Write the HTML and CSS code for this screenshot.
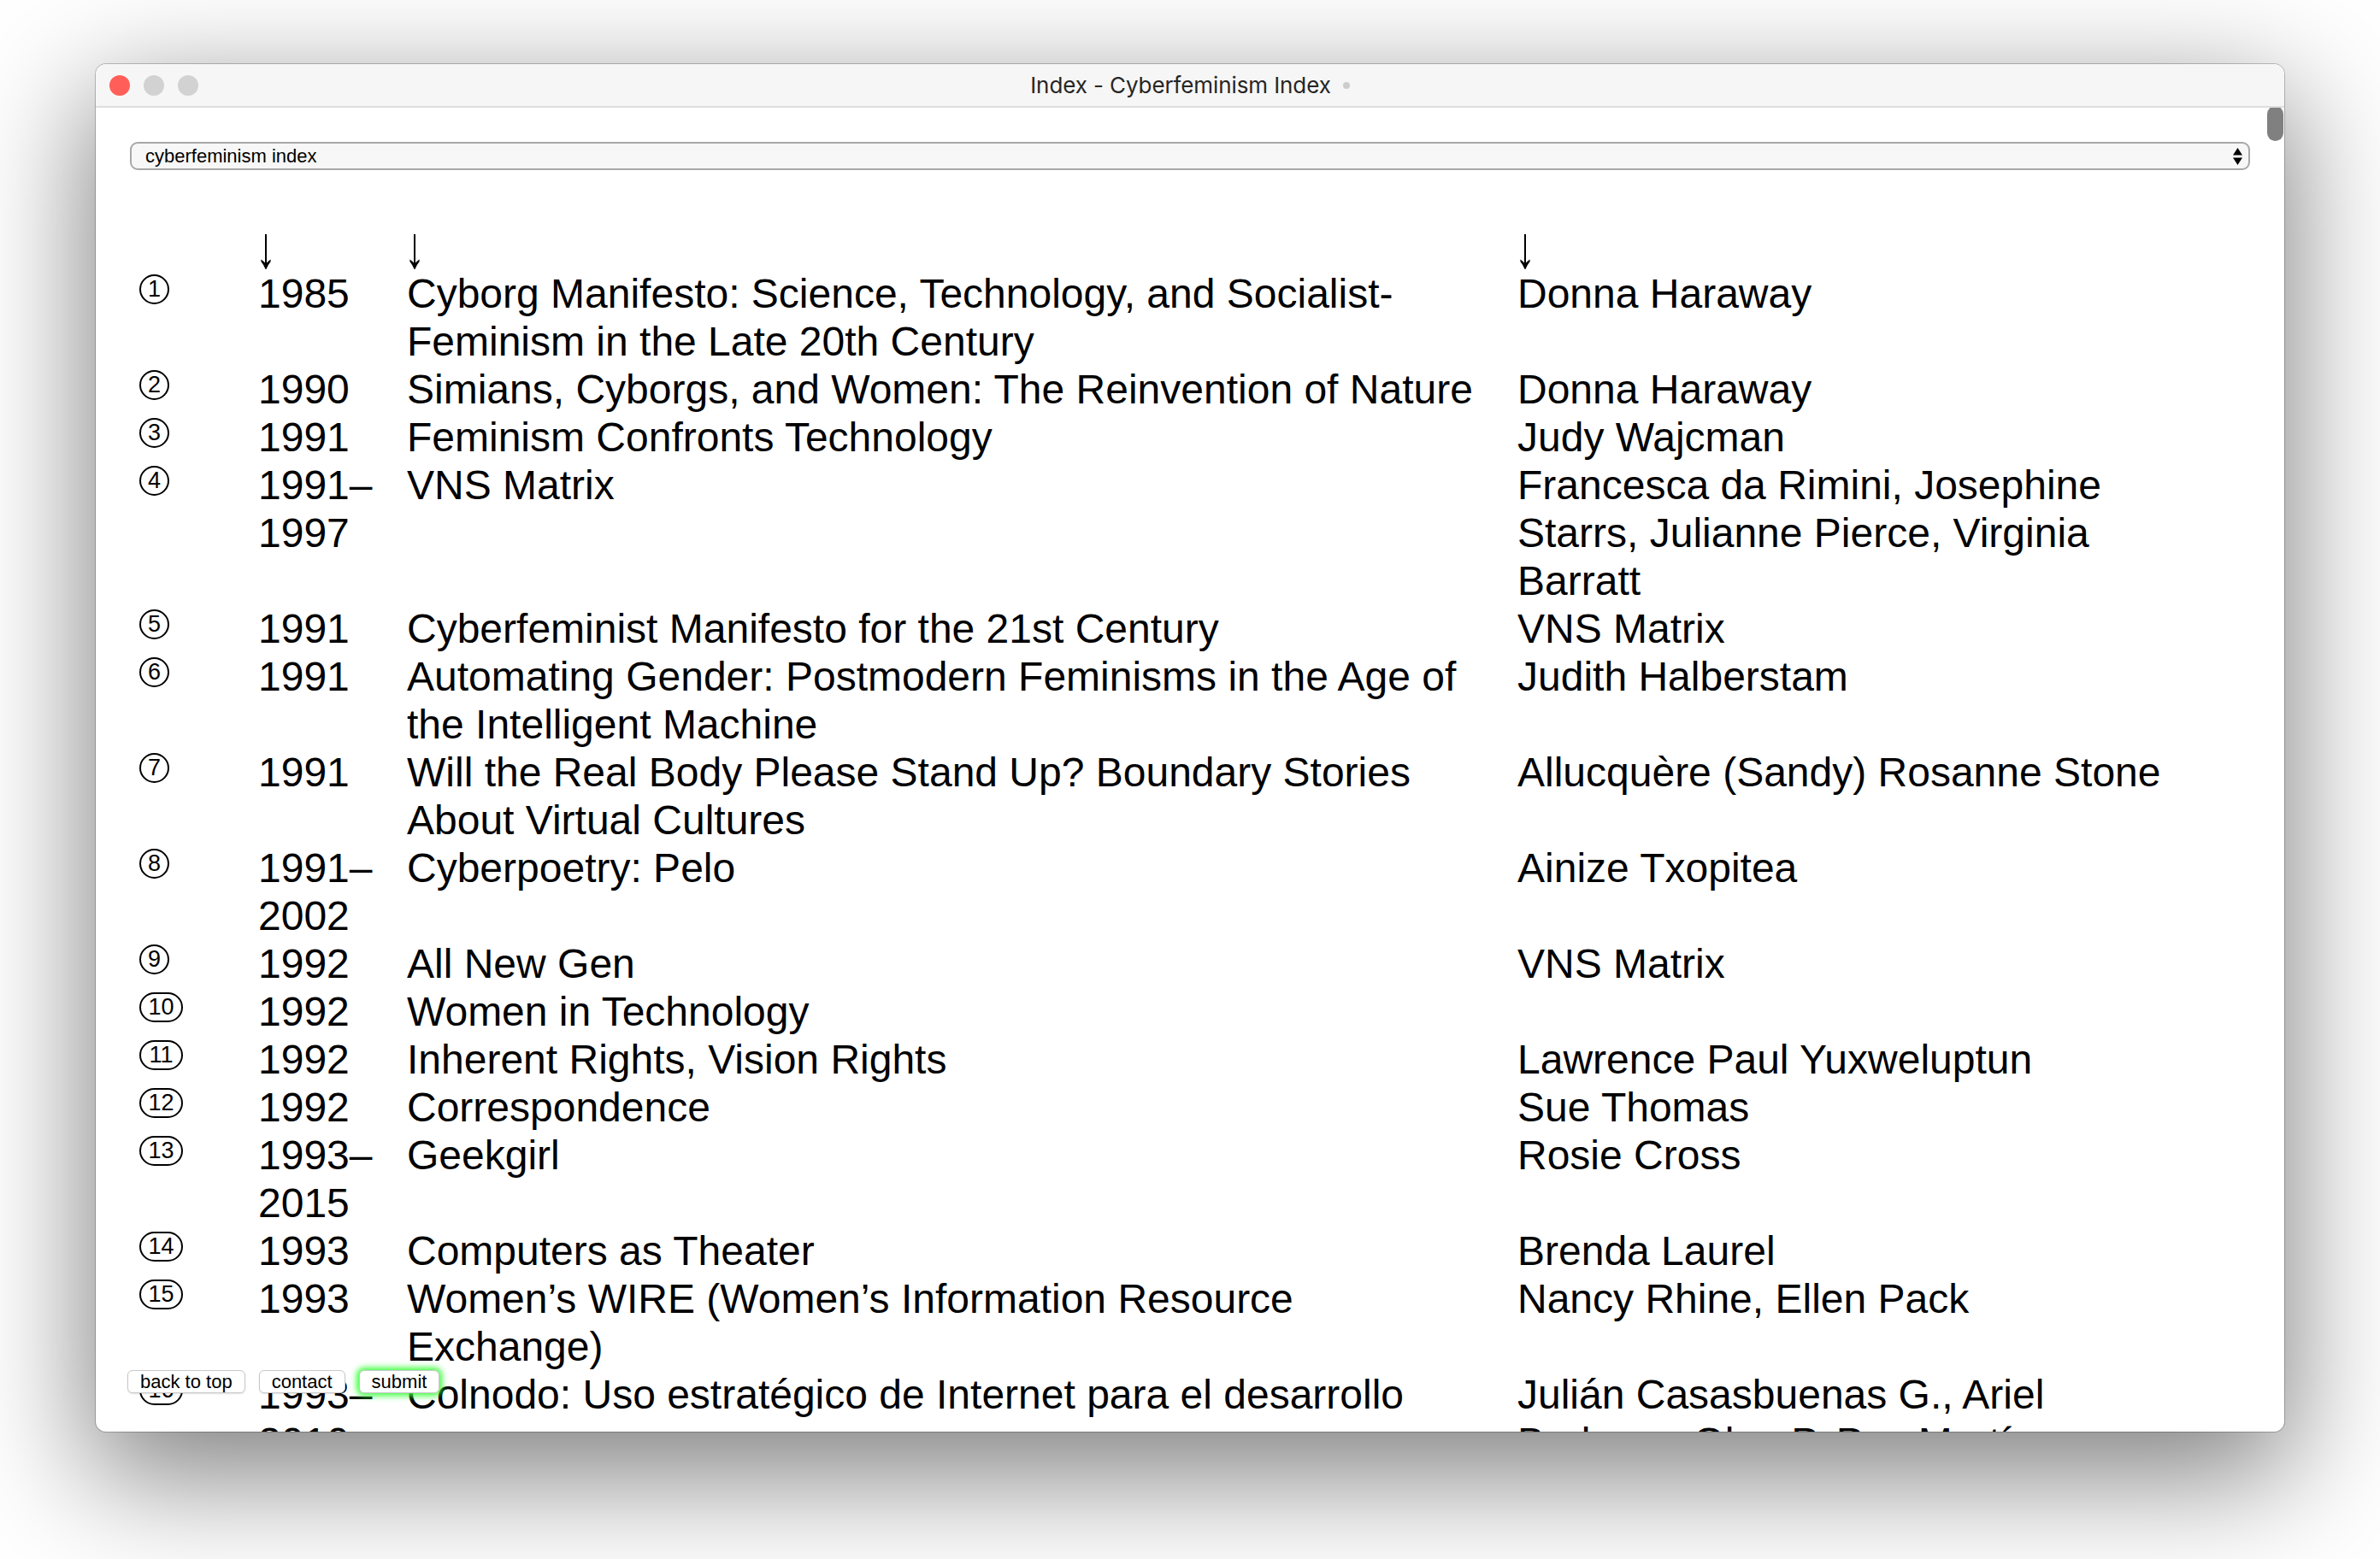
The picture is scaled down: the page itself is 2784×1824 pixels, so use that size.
FILE: index.html
```html
<!DOCTYPE html>
<html lang="en">
<head>
<meta charset="utf-8">
<title>Index - Cyberfeminism Index</title>
<link rel="stylesheet" href="styles.css">
</head>
<body>
<div class="window">
  <header class="titlebar">
    <div class="lights">
      <span class="light light-close"></span>
      <span class="light"></span>
      <span class="light"></span>
    </div>
    <div class="title">Index - Cyberfeminism Index<span class="title-dot"></span></div>
    <div></div>
  </header>
  <main class="viewport">
    <div class="page">
      <div class="picker">
        <span class="picker-label">cyberfeminism index</span>
        <svg class="picker-arrows" width="11" height="20" viewBox="0 0 11 20" aria-hidden="true">
          <polygon points="0,8.5 5.5,0 11,8.5" fill="#000"/>
          <polygon points="0,11.5 11,11.5 5.5,20" fill="#000"/>
        </svg>
      </div>

      <div class="index">
        <div class="row row-head">
          <div class="c-num"></div>
          <div class="c-year"><span class="sort-arrow">↓</span></div>
          <div class="c-title"><span class="sort-arrow">↓</span></div>
          <div class="c-author"><span class="sort-arrow">↓</span></div>
        </div>
        <div class="row">
          <div class="c-num"><span class="num">1</span></div>
          <div class="c-year">1985</div>
          <div class="c-title">Cyborg Manifesto: Science, Technology, and Socialist-Feminism in the Late 20th Century</div>
          <div class="c-author">Donna Haraway</div>
        </div>
        <div class="row">
          <div class="c-num"><span class="num">2</span></div>
          <div class="c-year">1990</div>
          <div class="c-title">Simians, Cyborgs, and Women: The Reinvention of Nature</div>
          <div class="c-author">Donna Haraway</div>
        </div>
        <div class="row">
          <div class="c-num"><span class="num">3</span></div>
          <div class="c-year">1991</div>
          <div class="c-title">Feminism Confronts Technology</div>
          <div class="c-author">Judy Wajcman</div>
        </div>
        <div class="row">
          <div class="c-num"><span class="num">4</span></div>
          <div class="c-year">1991–1997</div>
          <div class="c-title">VNS Matrix</div>
          <div class="c-author">Francesca da Rimini, Josephine Starrs, Julianne Pierce, Virginia Barratt</div>
        </div>
        <div class="row">
          <div class="c-num"><span class="num">5</span></div>
          <div class="c-year">1991</div>
          <div class="c-title">Cyberfeminist Manifesto for the 21st Century</div>
          <div class="c-author">VNS Matrix</div>
        </div>
        <div class="row">
          <div class="c-num"><span class="num">6</span></div>
          <div class="c-year">1991</div>
          <div class="c-title">Automating Gender: Postmodern Feminisms in the Age of the Intelligent Machine</div>
          <div class="c-author">Judith Halberstam</div>
        </div>
        <div class="row">
          <div class="c-num"><span class="num">7</span></div>
          <div class="c-year">1991</div>
          <div class="c-title">Will the Real Body Please Stand Up? Boundary Stories About Virtual Cultures</div>
          <div class="c-author">Allucquère (Sandy) Rosanne Stone</div>
        </div>
        <div class="row">
          <div class="c-num"><span class="num">8</span></div>
          <div class="c-year">1991–2002</div>
          <div class="c-title">Cyberpoetry: Pelo</div>
          <div class="c-author">Ainize Txopitea</div>
        </div>
        <div class="row">
          <div class="c-num"><span class="num">9</span></div>
          <div class="c-year">1992</div>
          <div class="c-title">All New Gen</div>
          <div class="c-author">VNS Matrix</div>
        </div>
        <div class="row">
          <div class="c-num"><span class="num num-wide">10</span></div>
          <div class="c-year">1992</div>
          <div class="c-title">Women in Technology</div>
          <div class="c-author"></div>
        </div>
        <div class="row">
          <div class="c-num"><span class="num num-wide">11</span></div>
          <div class="c-year">1992</div>
          <div class="c-title">Inherent Rights, Vision Rights</div>
          <div class="c-author">Lawrence Paul Yuxweluptun</div>
        </div>
        <div class="row">
          <div class="c-num"><span class="num num-wide">12</span></div>
          <div class="c-year">1992</div>
          <div class="c-title">Correspondence</div>
          <div class="c-author">Sue Thomas</div>
        </div>
        <div class="row">
          <div class="c-num"><span class="num num-wide">13</span></div>
          <div class="c-year">1993–2015</div>
          <div class="c-title">Geekgirl</div>
          <div class="c-author">Rosie Cross</div>
        </div>
        <div class="row">
          <div class="c-num"><span class="num num-wide">14</span></div>
          <div class="c-year">1993</div>
          <div class="c-title">Computers as Theater</div>
          <div class="c-author">Brenda Laurel</div>
        </div>
        <div class="row">
          <div class="c-num"><span class="num num-wide">15</span></div>
          <div class="c-year">1993</div>
          <div class="c-title">Women’s WIRE (Women’s Information Resource Exchange)</div>
          <div class="c-author">Nancy Rhine, Ellen Pack</div>
        </div>
        <div class="row">
          <div class="c-num"><span class="num num-wide">16</span></div>
          <div class="c-year">1993–2010</div>
          <div class="c-title">Colnodo: Uso estratégico de Internet para el desarrollo</div>
          <div class="c-author">Julián Casasbuenas G., Ariel Barbosa, Olga P. Paz Martínez</div>
        </div>
      </div>
    </div>

    <nav class="footer-btns">
      <button class="btn" type="button">back to top</button>
      <button class="btn" type="button">contact</button>
      <button class="btn btn-glow" type="button">submit</button>
    </nav>
    <div class="scroll-thumb"></div>
  </main>
</div>
</body>
</html>
```

FILE: styles.css
```css
* {
  box-sizing: border-box;
}

html,
body {
  margin: 0;
  padding: 0;
  background: #ffffff;
}

body {
  width: 2784px;
  height: 1824px;
  overflow: hidden;
  font-family: "Liberation Sans", Arial, Helvetica, sans-serif;
  color: #000;
}

.window {
  margin: 75px 0 0 112px;
  width: 2560px;
  height: 1600px;
  border-radius: 12px;
  overflow: hidden;
  background: #fff;
  display: flex;
  flex-direction: column;
  box-shadow:
    0 0 0 1px rgba(0, 0, 0, 0.22),
    0 44px 140px 8px rgba(0, 0, 0, 0.5);
}

/* ---------- title bar ---------- */
.titlebar {
  flex: 0 0 auto;
  height: 51px;
  background: #f6f6f6;
  border-bottom: 2px solid #dedede;
  display: grid;
  grid-template-columns: 1fr auto 1fr;
  align-items: center;
}

.lights {
  display: flex;
  gap: 16px;
  padding-left: 16px;
}

.light {
  width: 24px;
  height: 24px;
  border-radius: 50%;
  background: #d2d2d2;
}

.light-close {
  background: #ff5f58;
}

.title {
  font-family: Inter, "Noto Sans", sans-serif;
  font-size: 26px;
  color: #262626;
  display: flex;
  align-items: center;
  letter-spacing: -0.1px;
}

.title-dot {
  width: 8px;
  height: 8px;
  border-radius: 50%;
  background: #cccccc;
  margin-left: 14px;
}

/* ---------- viewport ---------- */
.viewport {
  flex: 1 1 auto;
  position: relative;
  overflow: hidden;
}

.page {
  padding: 40px 40px 0 40px;
}

.picker {
  height: 33px;
  border: 2px solid #a8a8a8;
  border-radius: 9px;
  background: #f7f7f7;
  display: flex;
  align-items: center;
  justify-content: space-between;
  padding: 0 7px 0 16px;
  font-size: 22px;
  color: #000;
}

.picker-arrows {
  display: block;
}

/* ---------- index table ---------- */
.index {
  margin-top: 61px;
  font-size: 48px;
  line-height: 56px;
}

.row {
  display: grid;
  grid-template-columns: 150px 174px 1299px 1fr;
}

.c-num {
  padding-left: 11px;
}

.c-year {
  padding-right: 24px;
}

.c-title {
  padding-right: 36px;
}

.c-author {
  padding-right: 60px;
}

.sort-arrow {
  display: inline-block;
  margin-left: -3px;
  transform: translateY(2px) scaleY(1.45);
}

.num {
  display: inline-flex;
  align-items: center;
  justify-content: center;
  margin-top: 5px;
  height: 35px;
  min-width: 35px;
  padding: 0 7px;
  border: 2.5px solid #000;
  border-radius: 18px;
  font-size: 27px;
  line-height: 1;
  vertical-align: top;
}

.num-wide {
  min-width: 51px;
}

/* ---------- floating buttons ---------- */
.footer-btns {
  position: absolute;
  left: 37px;
  bottom: 45px;
  display: flex;
  gap: 16px;
}

.btn {
  height: 27px;
  padding: 0 14px;
  border: 1px solid #c8c8c8;
  border-radius: 6px;
  background: #fff;
  font-family: "Liberation Sans", Arial, sans-serif;
  font-size: 22px;
  line-height: 25px;
  color: #000;
  box-shadow: 0 1px 2px rgba(0, 0, 0, 0.12);
}

.btn-glow {
  box-shadow: 0 0 7px 3px #3cff3c;
}

.scroll-thumb {
  position: absolute;
  top: -2px;
  right: 1px;
  width: 19px;
  height: 41px;
  border-radius: 10px;
  background: #808080;
}
```
